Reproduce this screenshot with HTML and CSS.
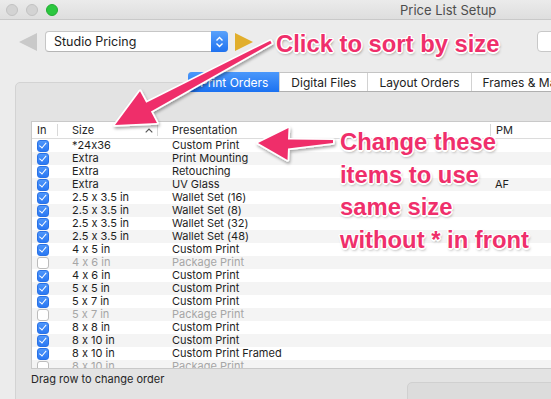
FILE: index.html
```html
<!DOCTYPE html>
<html>
    <head>
        <title>Price List Setup</title>
        <link rel="stylesheet" href="styles.css">
    </head>
    <body>
        <div class="window">
            <div class="titlebar">
                <div class="lights">
                    <span class="light"></span>
                    <span class="light"></span>
                    <span class="light green"></span>
                </div>
                <div class="title">Price List Setup</div>
            </div>

            <div class="toolbar">
                <svg class="nav" width="18" height="18" viewBox="0 0 18 18">
                    <polygon points="18,0 18,18 0,9" fill="#c9c9c9"/>
                </svg>
                <div class="popup">
                    <span class="popup-label">Studio Pricing</span>
                    <span class="stepper">
                        <svg width="9" height="12" viewBox="0 0 9 12">
                            <polyline points="1.5,4.5 4.5,1.5 7.5,4.5" fill="none" stroke="#fff" stroke-width="1.4"/>
                            <polyline points="1.5,7.5 4.5,10.5 7.5,7.5" fill="none" stroke="#fff" stroke-width="1.4"/>
                        </svg>
                    </span>
                </div>
                <svg class="nav forward" width="18" height="18" viewBox="0 0 18 18">
                    <polygon points="0,0 0,18 18,9" fill="#e1ae2c"/>
                </svg>
                <div class="search"></div>
            </div>

            <div class="panel">
                <div class="tabs">
                    <div class="tab active">Print Orders</div>
                    <div class="tab">Digital Files</div>
                    <div class="tab">Layout Orders</div>
                    <div class="tab">Frames &amp; Mats</div>
                </div>

                <div class="table">
                    <div class="thead">
                        <div class="th th-in">In</div>
                        <div class="th th-size">
                            <span>Size</span>
                            <svg width="8" height="5" viewBox="0 0 8 5">
                                <polyline points="0.7,4.3 4,1 7.3,4.3" fill="none" stroke="#555" stroke-width="1.2"/>
                            </svg>
                        </div>
                        <div class="th">Presentation</div>
                        <div class="th th-pm">PM</div>
                    </div>
                    <div class="tbody">
                        <div class="row"><span class="box on"></span><span>*24x36</span><span>Custom Print</span><span></span></div>
                        <div class="row"><span class="box on"></span><span>Extra</span><span>Print Mounting</span><span></span></div>
                        <div class="row"><span class="box on"></span><span>Extra</span><span>Retouching</span><span></span></div>
                        <div class="row"><span class="box on"></span><span>Extra</span><span>UV Glass</span><span>AF</span></div>
                        <div class="row"><span class="box on"></span><span>2.5 x 3.5 in</span><span>Wallet Set (16)</span><span></span></div>
                        <div class="row"><span class="box on"></span><span>2.5 x 3.5 in</span><span>Wallet Set (8)</span><span></span></div>
                        <div class="row"><span class="box on"></span><span>2.5 x 3.5 in</span><span>Wallet Set (32)</span><span></span></div>
                        <div class="row"><span class="box on"></span><span>2.5 x 3.5 in</span><span>Wallet Set (48)</span><span></span></div>
                        <div class="row"><span class="box on"></span><span>4 x 5 in</span><span>Custom Print</span><span></span></div>
                        <div class="row off"><span class="box"></span><span>4 x 6 in</span><span>Package Print</span><span></span></div>
                        <div class="row"><span class="box on"></span><span>4 x 6 in</span><span>Custom Print</span><span></span></div>
                        <div class="row"><span class="box on"></span><span>5 x 5 in</span><span>Custom Print</span><span></span></div>
                        <div class="row"><span class="box on"></span><span>5 x 7 in</span><span>Custom Print</span><span></span></div>
                        <div class="row off"><span class="box"></span><span>5 x 7 in</span><span>Package Print</span><span></span></div>
                        <div class="row"><span class="box on"></span><span>8 x 8 in</span><span>Custom Print</span><span></span></div>
                        <div class="row"><span class="box on"></span><span>8 x 10 in</span><span>Custom Print</span><span></span></div>
                        <div class="row"><span class="box on"></span><span>8 x 10 in</span><span>Custom Print Framed</span><span></span></div>
                        <div class="row off"><span class="box"></span><span>8 x 10 in</span><span>Package Print</span><span></span></div>
                    </div>
                </div>

                <div class="footer">
                    <div class="hint">Drag row to change order</div>
                    <div class="button"></div>
                </div>
            </div>

            <!-- annotations drawn over the window -->
            <svg class="arrows" width="551" height="399" viewBox="0 0 551 399">
                <defs>
                    <filter id="shadow" x="-20%" y="-20%" width="140%" height="140%">
                        <feDropShadow dx="1" dy="2" stdDeviation="1.5" flood-color="#000" flood-opacity="0.35"/>
                    </filter>
                </defs>
                <polygon class="arrow" points="270.3,40.7 146.2,102.7 140,91.2 115,125 157,123 150.9,111.5 271.7,43.3"/>
                <polygon class="arrow" points="333,140 288,139.5 288.5,128 258,143 287.5,160 288,148.5 333,143"/>
            </svg>
            <div class="note note-sort">Click to sort by size</div>
            <div class="note note-change">Change these<br>items to use<br>same size<br>without * in front</div>
        </div>
    </body>
</html>
```

FILE: styles.css
```css
body {
    margin: 0;
    background-color: #ececec;
    font-family: Inter, "Liberation Sans", sans-serif;
    font-feature-settings: "calt" 0;
    color: #222;
    overflow: hidden;
}
.window {
    position: relative;
    width: 551px;
    height: 399px;
    overflow: hidden;
}

/* title bar */
.titlebar {
    display: flex;
    align-items: center;
    height: 19px;
    border-bottom: 1px solid #c9c9c9;
    background: linear-gradient(#ebebeb, #dedede);
}
.lights {
    display: flex;
    gap: 8px;
    margin-left: 6px;
}
.light {
    width: 10px;
    height: 10px;
    border-radius: 50%;
    background-color: #d3d3d3;
    border: 1px solid #c2c2c2;
}
.light.green {
    background-color: #2bc73f;
    border-color: #22ad33;
}
.title {
    margin-left: 342px;
    font-size: 13px;
    color: #4d4d4d;
    white-space: nowrap;
}

/* toolbar */
.toolbar {
    display: flex;
    align-items: center;
    padding: 11px 0 0 19px;
    height: 21px;
}
.toolbar > * {
    flex-shrink: 0;
}
.popup {
    display: flex;
    align-items: center;
    justify-content: space-between;
    width: 181px;
    height: 19px;
    margin-left: 8px;
    background: #fff;
    border: 1px solid #c6c6c6;
    border-bottom-color: #b5b5b5;
    border-radius: 4px;
}
.popup-label {
    padding-left: 8px;
    font-size: 12.5px;
    color: #1c1c1c;
}
.stepper {
    display: flex;
    align-items: center;
    justify-content: center;
    width: 17px;
    height: 21px;
    margin-right: -1px;
    border-radius: 0 4px 4px 0;
    background: linear-gradient(#5aa2fb, #1f72f0);
}
.forward {
    margin-left: 7px;
}
.search {
    width: 40px;
    height: 19px;
    margin-left: 284px;
    background: #fff;
    border: 1px solid #c8c8c8;
    border-radius: 4px;
}

/* tab panel */
.panel {
    width: 600px;
    height: 330px;
    margin: 30px 0 0 15px;
    padding-left: 15px;
    background-color: #e3e3e3;
    border: 1px solid #d3d3d3;
    border-radius: 5px 0 0 0;
}
.tabs {
    display: flex;
    height: 20px;
    margin: -11px 0 0 157px;
    background: #fff;
    border: 1px solid #c4c4c4;
    border-bottom-color: #b0b0b0;
    border-radius: 4px;
    box-sizing: border-box;
    width: 420px;
}
.tab {
    display: flex;
    align-items: center;
    padding: 0 11px;
    font-size: 12px;
    color: #222;
    white-space: nowrap;
    border-left: 1px solid #d2d2d2;
}
.tab:first-child {
    border-left: none;
}
.tab.active {
    margin: -1px 0 -1px -1px;
    padding-left: 12px;
    background: linear-gradient(#4b98fb, #1b71f1);
    color: #fff;
    border-radius: 4px 0 0 4px;
}

/* table */
.table {
    width: 560px;
    margin-top: 29px;
    background: #fff;
    border: 1px solid #c9c9c9;
}
.thead,
.row {
    display: grid;
    grid-template-columns: 25px 100px 333px 1fr;
}
.thead {
    height: 16px;
    align-items: center;
    border-bottom: 1px solid #dcdcdc;
}
.th {
    line-height: 12px;
    font-size: 11px;
    color: #262626;
    padding-left: 14px;
    border-left: 1px solid #d9d9d9;
}
.th-in {
    padding-left: 5px;
    border-left: none;
}
.th-pm {
    padding-left: 5px;
}
.th-size {
    display: flex;
    align-items: center;
    justify-content: space-between;
    padding-right: 4px;
}
.tbody {
    height: 229px;
    overflow: hidden;
}
.row {
    height: 13px;
    line-height: 13px;
    font-size: 11px;
    color: #1e1e1e;
    white-space: nowrap;
}
.row:nth-child(even) {
    background-color: #f4f4f4;
}
.row span:nth-child(2),
.row span:nth-child(3) {
    padding-left: 15px;
}
.row span:nth-child(4) {
    padding-left: 5px;
}
.row.off {
    color: #a6a6a6;
}
.box {
    display: flex;
    align-items: center;
    justify-content: center;
    box-sizing: border-box;
    width: 12px;
    height: 12px;
    margin: 0.5px 0 0 5px;
    background: #fff;
    border: 1px solid #bcbcbc;
    border-radius: 3px;
}
.box.on {
    background: linear-gradient(#4e96fa, #2a78f3);
    border-color: #2a72e6;
}
.box.on::after {
    content: "";
    width: 2.5px;
    height: 5.5px;
    margin-top: -2px;
    border-right: 1.8px solid #fff;
    border-bottom: 1.8px solid #fff;
    transform: rotate(40deg);
}

/* footer */
.footer {
    display: grid;
    grid-template-columns: 376px 200px;
    align-items: start;
}
.hint {
    margin-top: 3px;
    line-height: 14px;
    font-size: 11px;
    color: #262626;
}
.button {
    height: 28px;
    margin-top: 13px;
    background-color: #dcdcdc;
    border: 1px solid #d0d0d0;
    border-radius: 5px;
}

/* annotations */
.arrows {
    position: absolute;
    top: 0;
    left: 0;
}
.arrow {
    fill: #ef2f6b;
    stroke: #fff;
    stroke-width: 3.5;
    stroke-linejoin: round;
    paint-order: stroke;
    filter: url(#shadow);
}
.note {
    position: absolute;
    font-family: "Liberation Sans", Arial, sans-serif;
    font-weight: bold;
    font-size: 23.8px;
    color: #ef2f6b;
    white-space: nowrap;
    text-shadow: -1.5px 0 #fff, 1.5px 0 #fff, 0 -1.5px #fff, 0 1.5px #fff,
        -1px -1px #fff, 1px -1px #fff, -1px 1px #fff, 1px 1px #fff,
        1px 2px 3px rgba(0, 0, 0, 0.45);
}
.note-sort {
    top: 31px;
    left: 276px;
    line-height: 26px;
}
.note-change {
    top: 126px;
    left: 340px;
    line-height: 32.5px;
}
```
